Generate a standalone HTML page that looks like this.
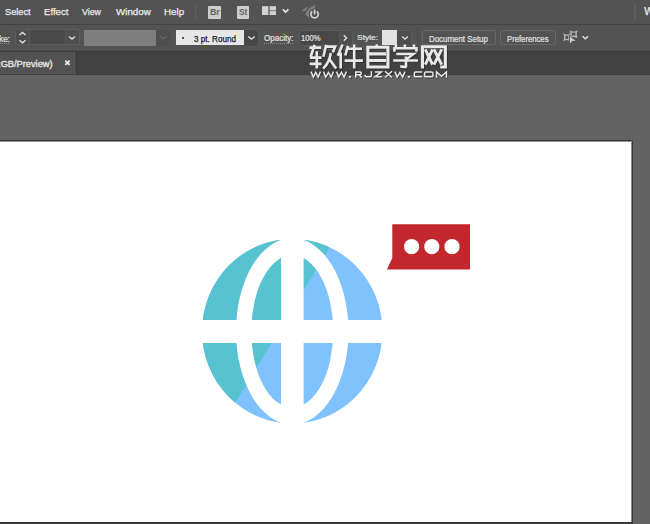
<!DOCTYPE html>
<html><head><meta charset="utf-8">
<style>
html,body{margin:0;padding:0;width:650px;height:524px;overflow:hidden;background:#636363;}
body{position:relative;font-family:"Liberation Sans",sans-serif;}
.a{position:absolute;}
.t{position:absolute;white-space:nowrap;transform-origin:0 0;line-height:1;}
#menu{left:0;top:0;width:650px;height:24px;background:#535353;}
#menuline{left:0;top:24px;width:650px;height:1px;background:#434343;}
#ctrl{left:0;top:25px;width:650px;height:26px;background:#535353;border-bottom:0;}
#ctrlline{left:0;top:51px;width:650px;height:1px;background:#3c3c3c;}
#tabs{left:0;top:52px;width:650px;height:23px;background:#424242;}
#tab{left:0;top:52px;width:74px;height:23px;background:#525252;border-right:1px solid #575757;}
#tabline{left:0;top:74px;width:650px;height:1px;background:#3f3f3f;}
#board{left:0;top:140px;width:631px;height:382px;background:#3a3a3a;}
#white{left:0;top:142px;width:631px;height:380px;background:#fff;}
.mt{color:#ececec;font-size:11px;-webkit-text-stroke:0.25px #ececec;}
.ct{color:#e4e4e4;font-size:9px;-webkit-text-stroke:0.2px #e4e4e4;}
.ct2{color:#1e1e1e;font-size:9px;-webkit-text-stroke:0.25px #1e1e1e;}
.bt{color:#606060;font-size:8.5px;font-weight:bold;}
.tt{color:#e6e6e6;font-size:10px;-webkit-text-stroke:0.35px #e6e6e6;}
</style></head><body>
<div class="a" id="menu"></div>
<div class="a" id="menuline"></div>
<div class="a" id="ctrl"></div>
<div class="a" id="ctrlline"></div><div class="a" style="left:0;top:49px;width:650px;height:1px;background:#575757"></div><div class="a" style="left:0;top:50px;width:650px;height:1px;background:#4c4c4c"></div>
<div class="a" id="tabs"></div>
<div class="a" id="tab"></div>
<div class="a" id="tabline"></div>
<div class="a" style="left:0;top:140px;width:633px;height:384px;background:#383838;border-radius:0 2px 0 0"></div>
<div class="a" style="left:0;top:141px;width:632px;height:381px;background:#8f8f8f;"></div>
<div class="a" style="left:0;top:142px;width:631px;height:380px;background:#fff;"></div>

<!-- menu texts -->
<div class="t mt" id="m1" style="left:4.61px;top:6.80px;font-size:9.50px;transform:scaleX(0.967);">Select</div>
<div class="t mt" id="m2" style="left:44.09px;top:6.80px;font-size:9.50px;transform:scaleX(1.009);">Effect</div>
<div class="t mt" id="m3" style="left:81.89px;top:6.80px;font-size:9.50px;transform:scaleX(0.926);">View</div>
<div class="t mt" id="m4" style="left:115.84px;top:6.80px;font-size:9.50px;transform:scaleX(1.029);">Window</div>
<div class="t mt" id="m5" style="left:164.47px;top:6.80px;font-size:9.50px;transform:scaleX(1.027);">Help</div>
<div class="t mt" id="m6" style="left:644.2px;top:6.7px;font-size:10px;">W</div>
<div class="a" style="left:195px;top:4px;width:1px;height:16px;background:#5e5e5e"></div>
<div class="a" style="left:634px;top:4px;width:1.5px;height:16px;background:#5c5c5c"></div>
<div class="a" style="left:208px;top:5.5px;width:13px;height:13px;background:#cdcdcd;border-radius:1px"></div>
<div class="t bt" id="br" style="left:209.87px;top:7.55px;font-size:8.80px;transform:scaleX(0.997);">Br</div>
<div class="a" style="left:236.8px;top:5.5px;width:12.6px;height:13px;background:#cdcdcd;border-radius:1px"></div>
<div class="t bt" id="st" style="left:238.98px;top:7.59px;font-size:8.80px;transform:scaleX(0.938);">St</div>
<svg class="a" style="left:0;top:0" width="650" height="24" viewBox="0 0 650 24">
  <rect x="262" y="6.2" width="6.4" height="8.8" fill="#d2d2d2"/>
  <rect x="269.6" y="6.2" width="6.4" height="4.2" fill="#d2d2d2"/>
  <rect x="269.6" y="11.1" width="6.4" height="3.9" fill="#d2d2d2"/>
  <polyline points="282.8,9.4 285.6,12 288.4,9.4" fill="none" stroke="#e6e6e6" stroke-width="1.7"/>
  <path d="M305.2,14.8 Q306.5,8.2 315.6,4.7 Q314,11.2 307.6,16.2 Z" fill="#7c7c7c"/>
  <path d="M301.6,11.6 Q303.8,7.8 308,7 L305.6,11 Z" fill="#7c7c7c"/>
  <path d="M307,15.5 L310.2,13.5 L308.6,18.2 Z" fill="#7c7c7c"/>
  <circle cx="314.6" cy="14.3" r="5.6" fill="#535353"/>
  <path d="M312.2,11.4 A3.7,3.7 0 1,0 317,11.4" fill="none" stroke="#d9d9d9" stroke-width="1.6"/>
  <line x1="314.6" y1="9.6" x2="314.6" y2="14.4" stroke="#d9d9d9" stroke-width="1.6"/>
</svg>

<!-- control bar -->
<div class="t ct" id="c1" style="left:-1px;top:34.5px;font-size:8.4px;">ke:</div>
<div class="a" style="left:0;top:43px;width:10px;height:1px;background:repeating-linear-gradient(90deg,#8c8c8c 0 1px,transparent 1px 2px)"></div>
<div class="a" style="left:15px;top:29px;width:63px;height:14px;border:1px solid #5d5d5d;background:#4e4e4e;border-radius:2px"></div>
<div class="a" style="left:29px;top:30px;width:1px;height:14px;background:#5b5b5b"></div>
<div class="a" style="left:30px;top:30px;width:35px;height:14px;background:#484848"></div>
<div class="a" style="left:65px;top:30px;width:1px;height:14px;background:#5b5b5b"></div>
<div class="a" style="left:84px;top:29.5px;width:72px;height:16.5px;background:#7e7e7e"></div>
<div class="a" style="left:156px;top:29.5px;width:15px;height:16.5px;background:#4f4f4f"></div>
<div class="a" style="left:175.5px;top:29.8px;width:68.7px;height:15.1px;background:#e7e7e7"></div>
<div class="a" style="left:181.5px;top:36.5px;width:2.5px;height:2.5px;background:#222;border-radius:50%"></div>
<div class="t ct2" id="c2" style="left:194.20px;top:34.70px;font-size:8.40px;transform:scaleX(0.970);">3 pt. Round</div>
<div class="a" style="left:244.2px;top:29px;width:13.8px;height:15.5px;background:#484848;border:1px solid #595959;border-left:0;border-radius:0 3px 3px 0"></div>
<div class="t ct" id="c3" style="left:263.85px;top:33.80px;font-size:8.40px;transform:scaleX(0.956);">Opacity:</div>
<div class="a" style="left:264px;top:42.5px;width:29px;height:1px;background:repeating-linear-gradient(90deg,#8c8c8c 0 1px,transparent 1px 2px)"></div>
<div class="a" style="left:298.5px;top:29.5px;width:52.5px;height:14.5px;background:#4f4f4f;border:1px solid #5a5a5a;border-radius:2px"></div><div class="a" style="left:299.5px;top:30.5px;width:39.5px;height:14.5px;background:#484848;"></div><div class="a" style="left:339px;top:30.5px;width:1px;height:14.5px;background:#585858;"></div>
<div class="t ct" id="c4" style="left:300.96px;top:34.20px;font-size:8.40px;transform:scaleX(0.913);">100%</div>

<div class="t ct" id="c5" style="left:356.74px;top:34.20px;font-size:8.00px;transform:scaleX(1.057);">Style:</div>
<div class="a" style="left:382px;top:30.2px;width:15.3px;height:14.8px;background:#e2e2e2"></div>
<div class="a" style="left:397px;top:29.5px;width:14px;height:14.5px;background:#4d4d4d;border:1px solid #5a5a5a;border-left:0;border-radius:0 2px 2px 0"></div><div class="a" style="left:417px;top:27px;width:1px;height:24px;background:#4a4a4a"></div>
<div class="a" style="left:422.4px;top:30.2px;width:71.5px;height:12.8px;border:1px solid #676767;border-radius:2px"></div>
<div class="t ct" id="c6" style="left:429.33px;top:34.60px;font-size:8.40px;transform:scaleX(0.944);">Document Setup</div>
<div class="a" style="left:500.4px;top:30.2px;width:54px;height:12.8px;border:1px solid #676767;border-radius:2px"></div>
<div class="t ct" id="c7" style="left:506.91px;top:35.00px;font-size:8.40px;transform:scaleX(0.919);">Preferences</div>
<svg class="a" style="left:0;top:24px" width="650" height="27" viewBox="0 24 650 27">
  <polyline points="19.5,35 22.5,32.5 25.5,35" fill="none" stroke="#e0e0e0" stroke-width="1.4"/>
  <polyline points="19.5,40.3 22.5,42.8 25.5,40.3" fill="none" stroke="#e0e0e0" stroke-width="1.4"/>
  <polyline points="69,36.5 72,39 75,36.5" fill="none" stroke="#e0e0e0" stroke-width="1.4"/>
  <polyline points="160.5,36.3 163.5,38.8 166.5,36.3" fill="none" stroke="#6b6b6b" stroke-width="1.2"/>
  <polyline points="248.3,36.5 251.5,39.2 254.7,36.5" fill="none" stroke="#e6e6e6" stroke-width="1.4"/>
  <polyline points="343.8,35.3 346.5,38 343.8,40.7" fill="none" stroke="#e0e0e0" stroke-width="1.4"/>
  <polyline points="402,36.5 405,39 408,36.5" fill="none" stroke="#e0e0e0" stroke-width="1.4"/>
  <polyline points="582.5,36.2 585.3,38.8 588.1,36.2" fill="none" stroke="#e0e0e0" stroke-width="1.4"/>
  <path d="M564.3,34.6 Q566.7,35.8 569.1,34.6 Q568,37.3 569.1,40 Q566.7,38.9 564.3,40 Q565.4,37.3 564.3,34.6 Z" fill="none" stroke="#b9b9b9" stroke-width="1.3"/>
  <path d="M570.6,31.5 Q573.6,32.6 576.5,31.5 Q575.4,34.2 576.5,36.8 Q573.6,35.7 570.6,36.8 Q571.7,34.2 570.6,31.5 Z" fill="none" stroke="#b9b9b9" stroke-width="1.3"/>
  <path d="M569.2,35.6 L576,41 L572.6,41.3 L570.2,44 Z" fill="#535353" stroke="#535353" stroke-width="1.2"/>
  <path d="M569.7,36.2 L575.5,40.8 L572.3,41 L570.1,43.6 Z" fill="#cacaca"/>
</svg>

<!-- tab -->
<div class="t tt" id="tb" style="left:-5.65px;top:60.0px;font-size:8.8px;transform:scaleX(1.05);">RGB/Preview)</div>
<svg class="a" style="left:0;top:50px" width="100" height="26" viewBox="0 50 100 26">
  <path d="M65.3,60.6 L69.6,64.9 M69.6,60.6 L65.3,64.9" stroke="#ececec" stroke-width="1.9"/>
</svg>
<div class="a" style="left:75px;top:52px;width:1px;height:23px;background:#484848"></div><div class="a" style="left:76px;top:52px;width:1px;height:23px;background:#3c3c3c"></div>

<!-- globe -->
<svg class="a" style="left:0;top:0" width="650" height="524" viewBox="0 0 650 524">
  <defs>
    <clipPath id="gc"><ellipse cx="292.25" cy="331.3" rx="90.2" ry="92.3"/></clipPath>
  </defs>
  <g clip-path="url(#gc)">
    <rect x="190" y="230" width="200" height="200" fill="#7fc2fd"/>
    <polygon points="190,230 340.1,230 218.9,430 190,430" fill="#57c2d0"/>
  </g>
  <path fill="#fff" fill-rule="evenodd" d="M236,331.3 a56.25,93.25 0 1,0 112.5,0 a56.25,93.25 0 1,0 -112.5,0 Z M251.25,331.3 a41,76.2 0 1,0 82,0 a41,76.2 0 1,0 -82,0 Z"/>
  <rect x="281" y="230" width="22.6" height="200" fill="#fff"/>
  <rect x="190" y="320" width="200" height="23" fill="#fff"/>
</svg>
<!-- bubble -->
<svg class="a" style="left:0;top:0" width="650" height="524" viewBox="0 0 650 524">
  <path d="M392.3,224.2 H470 V269.6 H386.9 L392.3,258 Z" fill="#c1272d"/>
  <circle cx="411.6" cy="246.7" r="7.6" fill="#fff"/>
  <circle cx="431.8" cy="246.7" r="7.6" fill="#fff"/>
  <circle cx="452.0" cy="246.7" r="7.6" fill="#fff"/>
</svg>
<!-- watermark -->
<svg class="a" style="left:0;top:0" width="650" height="100" viewBox="0 0 650 100">
<defs>
<g id="cj" fill="none" stroke-linecap="butt" stroke-linejoin="miter">
  <path stroke-width="2.7" d="M309.5,47.6 H321.2 M314.6,44.9 L310.6,57 M310,57.6 H321.5 M316.8,51.3 V68.6 M309.7,63.9 H321.5"/>
  <path stroke-width="2.6" d="M326.2,44.8 L323.4,56.8 M325,46.6 H335.2 L332.8,52.6 M330.8,53 Q329.5,62.5 323.2,68.6 M329.3,59 L336.2,68.6"/>
  <path stroke-width="2.6" d="M342.6,44.6 L337.8,55.8 M340.7,52.5 V68.6 M348,45.8 L345.3,55.5 M347,48.7 H362 M344.6,60.6 H362.9 M354.2,44.6 V68.6"/>
  <path stroke-width="3.1" d="M367.85,47.3 H387.95 V67.05 H367.85 Z M369.4,53.9 H386 M369.4,60.45 H386"/>
  <path stroke-width="2.4" d="M376.75,44.3 V46.5"/>
  <path stroke-width="2.6" d="M395.9,44.4 V46.9 M404.9,44.4 V46.9 M414,44.4 V46.9 M394.45,51.7 V48.3 H416.5 V51.7 M393.2,60.5 H418 M406,56.6 V67.6 M406.5,67.3 L400.2,66.4"/>
  <path stroke-width="2.3" d="M396.3,54 H413.8 L406.9,58.9"/>
  <path stroke-width="3.1" d="M422.45,68.6 V46.75 H445.35 V67 L440.3,67"/>
  <path stroke-width="2.9" d="M425.3,49.3 L432.6,64.6 M432.6,49.3 L425.3,64.6 M434,49.3 L441.7,64.6 M441.7,49.3 L434,64.6"/>
  <path stroke-width="1.5" d="M311.00,71.6 L313.30,77.1 L315.75,72.4 L318.20,77.1 L320.50,71.6 M323.50,71.6 L325.80,77.1 L328.50,72.4 L331.20,77.1 L333.50,71.6 M336.50,71.6 L338.80,77.1 L341.45,72.4 L344.10,77.1 L346.40,71.6 M355.75,77.7 V71.95 H360 Q361.35,71.95 361.35,73.3 Q361.35,74.65 360,74.65 H355.75 M359.2,74.65 L361.7,77.7 M371.35,71.2 V75.5 Q371.35,76.85 370,76.85 H366.5 Q365.15,76.85 365.15,75.5 V74.8 M374.9,71.95 H381.4 L375.1,76.85 H381.9 M385,71.3 L392,77.5 M392,71.3 L385,77.5 M394.90,71.6 L397.20,77.1 L399.95,72.4 L402.70,77.1 L405.00,71.6 M422.2,71.95 H415.8 Q414.35,71.95 414.35,73.4 V75.4 Q414.35,76.85 415.8,76.85 H422.2 M426,71.95 H431.5 Q432.95,71.95 432.95,73.4 V75.4 Q432.95,76.85 431.5,76.85 H426 Q424.55,76.85 424.55,75.4 V73.4 Q424.55,71.95 426,71.95 Z M436.55,77.7 V71.95 L441.5,76.2 L446.45,71.95 V77.7"/>
  <path stroke="none" fill="currentColor" d="M349.1,75.9 h2 v1.9 h-2 Z M407.9,75.9 h2.1 v1.9 h-2.1 Z"/>
</g>
</defs>
<use href="#cj" stroke="#262626" color="#262626" opacity="0.75" transform="translate(0.8,0.8)"/>
<use href="#cj" stroke="#e9e9e9" color="#e9e9e9"/>
</svg>
</body></html>
